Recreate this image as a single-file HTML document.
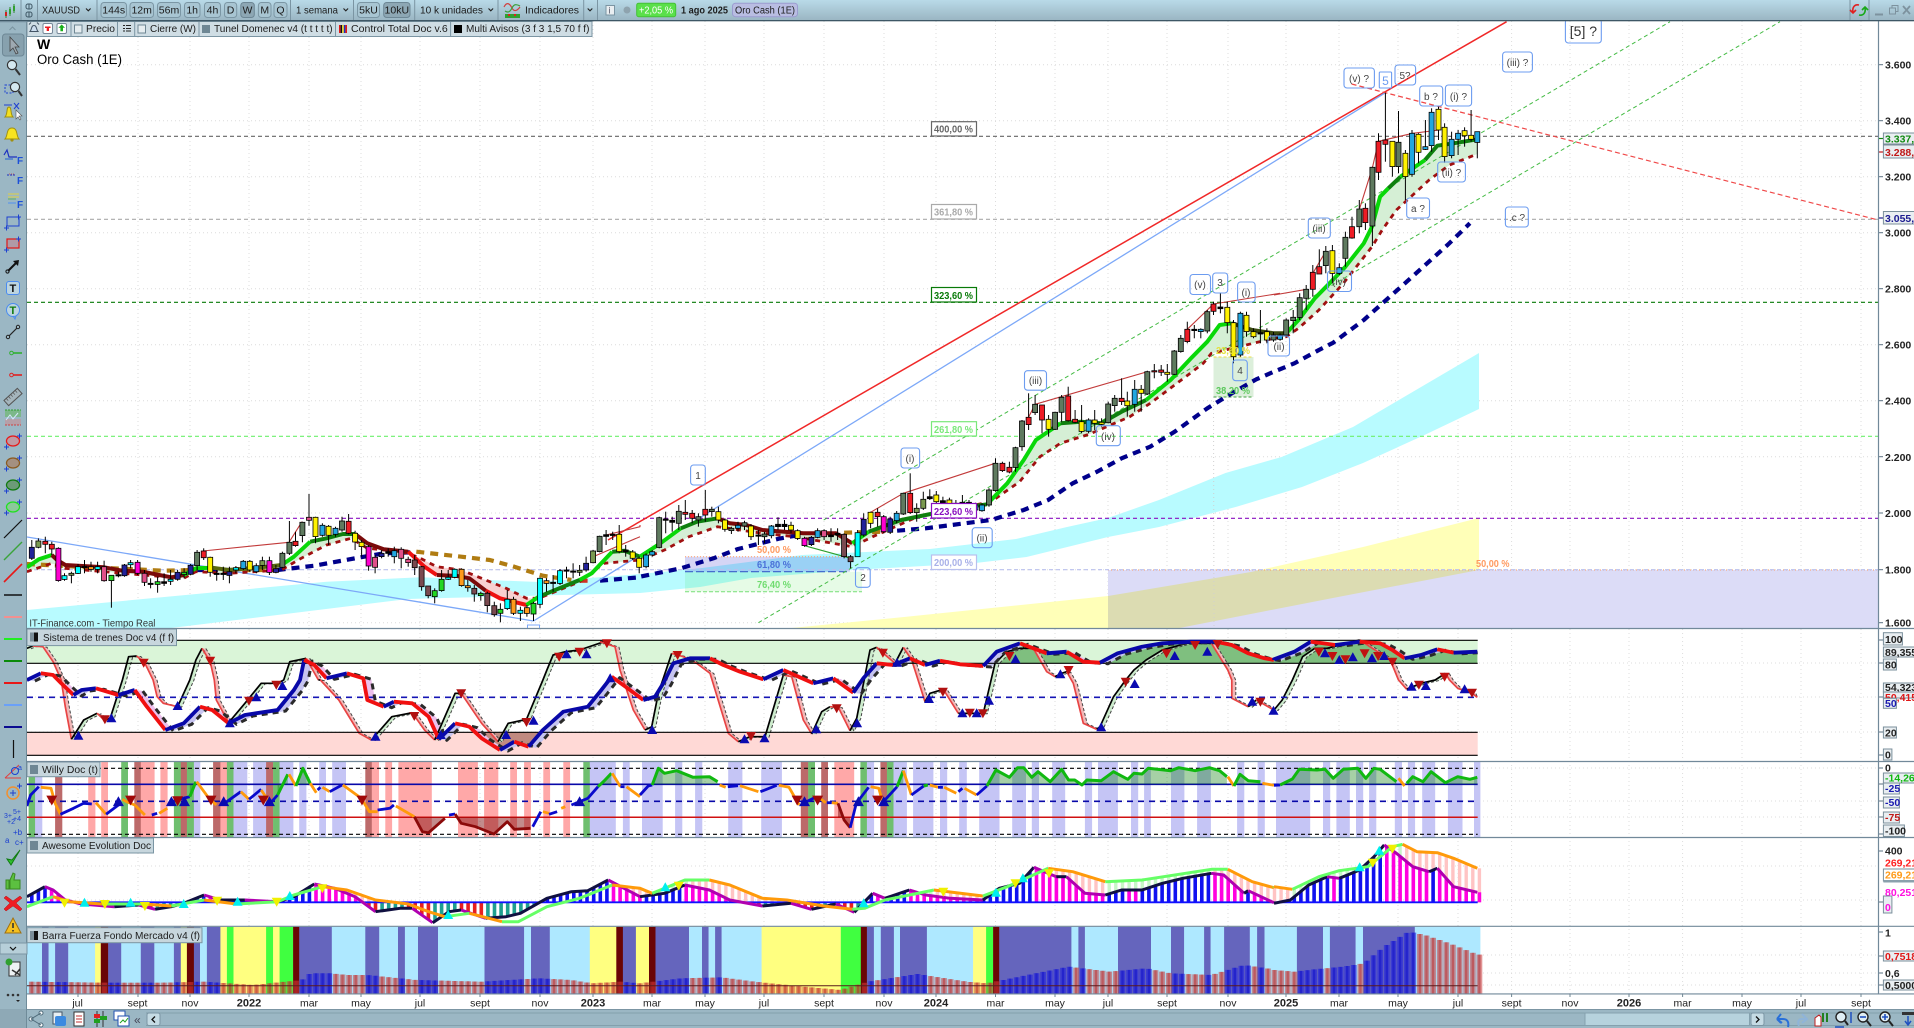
<!DOCTYPE html>
<html><head><meta charset="utf-8"><title>XAUUSD</title>
<style>
html,body{margin:0;padding:0;background:#fff;width:1914px;height:1028px;overflow:hidden}
svg{display:block;font-family:"Liberation Sans",sans-serif}
text{font-size:10px;fill:#1c1c1c}
.b{fill:#a8c5d2;stroke:#7b96a4;stroke-width:1}
.s{fill:#8da7b4;stroke:#6d8795;stroke-width:1}
.t{text-anchor:middle;font-size:10.5px}
.a{font-size:10.5px;font-weight:bold;fill:#222}
.w{fill:none;stroke:#6c9cf0;stroke-width:1.1}
.wt{text-anchor:middle;font-size:10px;fill:#444}
.ax{fill:#e9eef1;stroke:#7a8f9b;stroke-width:1}
.f{font-weight:bold;font-size:10px}
.x{text-anchor:middle;font-size:10.5px;fill:#222}
.y{text-anchor:middle;font-size:11px;font-weight:bold;fill:#222}
.lab{fill:#c7d6dd;stroke:#7b95a3;stroke-width:1}
</style></head><body>
<svg width="1914" height="1028" viewBox="0 0 1914 1028" xmlns="http://www.w3.org/2000/svg">
<defs>
<linearGradient id="tb" x1="0" y1="0" x2="0" y2="1"><stop offset="0" stop-color="#b9dae8"/><stop offset="1" stop-color="#9ab5c2"/></linearGradient>
<clipPath id="cm"><rect x="27" y="21" width="1851" height="607"/></clipPath>
<clipPath id="cg"><rect x="27" y="640" width="1451" height="23"/></clipPath>
<clipPath id="cr"><rect x="27" y="732" width="1451" height="23"/></clipPath>
<clipPath id="ct"><rect x="27" y="629" width="1451" height="132"/></clipPath>
<clipPath id="cw"><rect x="27" y="762" width="1451" height="75"/></clipPath>
</defs>
<rect width="1914" height="1028" fill="#fff"/>
<g id="dyn"></g>

<!-- wave labels -->
<rect class="w" x="1190" y="274.5" width="20.5" height="20" rx="3"/><text class="wt" x="1200" y="288">(v)</text>
<rect class="w" x="1212.7" y="273" width="15" height="20" rx="3"/><text class="wt" x="1220" y="286">3</text>
<rect class="w" x="1237.6" y="282" width="17.5" height="20" rx="3"/><text class="wt" x="1246" y="296">(i)</text>
<rect class="w" x="1308.3" y="218" width="22" height="20" rx="3"/><text class="wt" x="1319" y="232">(iii)</text>
<rect class="w" x="1327.5" y="271" width="24" height="20.5" rx="3"/><text class="wt" x="1339" y="285">(iv)</text>
<rect class="w" x="1344" y="68" width="30.4" height="20" rx="3"/><text class="wt" x="1359" y="82">(v) ?</text>
<rect class="w" x="1379.3" y="72" width="12.3" height="16" rx="1"/><text class="wt" x="1385.5" y="85" style="font-size:12px;fill:#6c9cf0">5</text>
<rect class="w" x="1395" y="65" width="20.6" height="20" rx="3"/><text class="wt" x="1405" y="79">5?</text>
<rect class="w" x="1419.7" y="86" width="23" height="20" rx="3"/><text class="wt" x="1431" y="100">b ?</text>
<rect class="w" x="1445.4" y="85" width="26.2" height="21" rx="3"/><text class="wt" x="1458.5" y="100">(i) ?</text>
<rect class="w" x="1502.6" y="52" width="29.8" height="20" rx="3"/><text class="wt" x="1517.5" y="66">(iii) ?</text>
<rect class="w" x="1565.4" y="19" width="35.9" height="24" rx="3"/><text class="wt" x="1583.4" y="36" style="font-size:14px;fill:#333">[5] ?</text>
<rect class="w" x="1437.7" y="162" width="27.7" height="20" rx="3"/><text class="wt" x="1451.5" y="176">(ii) ?</text>
<rect class="w" x="1406.7" y="198" width="22.8" height="20" rx="3"/><text class="wt" x="1418" y="212">a ?</text>
<rect class="w" x="1505.4" y="207" width="22.9" height="20" rx="3"/><text class="wt" x="1517" y="221">.c ?</text>
<rect class="w" x="690.6" y="465" width="14.7" height="20" rx="3"/><text class="wt" x="698" y="479">1</text>
<rect class="w" x="901" y="448" width="18.6" height="20" rx="3"/><text class="wt" x="910" y="462">(i)</text>
<rect class="w" x="1024.5" y="370.7" width="22" height="19.5" rx="3"/><text class="wt" x="1035.5" y="384">(iii)</text>
<rect class="w" x="1096.3" y="425.7" width="24" height="20" rx="3"/><text class="wt" x="1108" y="440">(iv)</text>
<rect class="w" x="972.2" y="527.7" width="20" height="20" rx="3"/><text class="wt" x="982" y="541.5">(ii)</text>
<rect class="w" x="855.5" y="567.7" width="14.7" height="19.6" rx="3"/><text class="wt" x="863" y="581">2</text>
<rect class="w" x="1232.7" y="360" width="14.6" height="20.7" rx="3"/><text class="wt" x="1240" y="374">4</text>
<rect class="w" x="1268" y="336" width="21.5" height="20" rx="3"/><text class="wt" x="1279" y="350">(ii)</text>

<!-- fib labels -->
<rect x="931.5" y="121.7" width="45" height="14.3" fill="#fff" stroke="#666" stroke-width="1.2"/><text class="f" x="934" y="132.5" textLength="39" lengthAdjust="spacingAndGlyphs" style="fill:#666">400,00 %</text>
<rect x="931.5" y="204.5" width="45" height="14.5" fill="#fff" stroke="#aaa" stroke-width="1.2"/><text class="f" x="934" y="215.5" textLength="39" lengthAdjust="spacingAndGlyphs" style="fill:#aaa">361,80 %</text>
<rect x="931.5" y="287.5" width="45" height="14.5" fill="#fff" stroke="#087a08" stroke-width="1.2"/><text class="f" x="934" y="299" textLength="39" lengthAdjust="spacingAndGlyphs" style="fill:#087a08">323,60 %</text>
<rect x="931.5" y="421.7" width="45" height="14.3" fill="#fff" stroke="#7ae87a" stroke-width="1.2"/><text class="f" x="934" y="433" textLength="39" lengthAdjust="spacingAndGlyphs" style="fill:#7ae87a">261,80 %</text>
<rect x="931.5" y="503.5" width="45" height="14.5" fill="#fff" stroke="#8a10c0" stroke-width="1.2"/><text class="f" x="934" y="515" textLength="39" lengthAdjust="spacingAndGlyphs" style="fill:#8a10c0">223,60 %</text>
<rect x="931.5" y="555" width="45" height="14.5" fill="#fff" stroke="#b9c0ee" stroke-width="1.2"/><text class="f" x="934" y="566" textLength="39" lengthAdjust="spacingAndGlyphs" style="fill:#a8b0e8">200,00 %</text>
<text class="f" x="757" y="553" textLength="34" lengthAdjust="spacingAndGlyphs" style="fill:#ff9a60">50,00 %</text>
<text class="f" x="757" y="568" textLength="34" lengthAdjust="spacingAndGlyphs" style="fill:#4a70d8">61,80 %</text>
<text class="f" x="757" y="588" textLength="34" lengthAdjust="spacingAndGlyphs" style="fill:#6fdc6f">76,40 %</text>
<text class="f" x="1216" y="354" textLength="34" lengthAdjust="spacingAndGlyphs" style="fill:#e4e040">23,60 %</text>
<text class="f" x="1216" y="394" textLength="34" lengthAdjust="spacingAndGlyphs" style="fill:#5cc85c">38,20 %</text>
<text class="f" x="1476" y="567" textLength="33.5" lengthAdjust="spacingAndGlyphs" style="fill:#ff9a60">50,00 %</text>

<text x="37" y="49" style="font-size:14px;font-weight:bold;fill:#000">W</text>
<text x="37" y="64" style="font-size:13.5px;fill:#000" textLength="85" lengthAdjust="spacingAndGlyphs">Oro Cash (1E)</text>
<text x="29.4" y="626.5" style="font-size:10.5px;fill:#333" textLength="126" lengthAdjust="spacingAndGlyphs">IT-Finance.com - Tiempo Real</text>

<!-- panel labels -->
<rect class="lab" x="27" y="629" width="149.5" height="16.6"/><rect x="30" y="632.5" width="8" height="9" fill="#111"/><rect x="30" y="632.5" width="4" height="9" fill="#7b8e99"/><text x="43" y="641" textLength="131" lengthAdjust="spacingAndGlyphs">Sistema de trenes Doc v4 (f f)</text>
<rect class="lab" x="27" y="762" width="73" height="14.7"/><rect x="30" y="765" width="8" height="9" fill="#6f8794"/><text x="42" y="773" textLength="56" lengthAdjust="spacingAndGlyphs">Willy Doc (t)</text>
<rect class="lab" x="27" y="838" width="126.5" height="15"/><rect x="30" y="841" width="8" height="9" fill="#6f8794"/><text x="42" y="849" textLength="109" lengthAdjust="spacingAndGlyphs">Awesome Evolution Doc</text>
<rect class="lab" x="27" y="927.7" width="175" height="15"/><rect x="30" y="931" width="8" height="9" fill="#111"/><rect x="30" y="931" width="4" height="9" fill="#7b8e99"/><text x="42" y="939" textLength="158" lengthAdjust="spacingAndGlyphs">Barra Fuerza Fondo Mercado v4 (f)</text>

<!-- panel seps -->
<g stroke="#72899a" stroke-width="1.2" fill="none">
<path d="M27 628.5H1914M27 761.5H1914M27 837.5H1914M27 926.3H1914M27 994H1914"/>
<path d="M1878.5 21V1009"/>
</g>

<!-- price axis -->
<g class="axis">
<text class="a" x="1885" y="68.5">3.600</text><text class="a" x="1885" y="124.5">3.400</text><text class="a" x="1885" y="180.5">3.200</text><text class="a" x="1885" y="236.5">3.000</text><text class="a" x="1885" y="292.5">2.800</text><text class="a" x="1885" y="348.5">2.600</text><text class="a" x="1885" y="404.5">2.400</text><text class="a" x="1885" y="461">2.200</text><text class="a" x="1885" y="517">2.000</text><text class="a" x="1885" y="573.5">1.800</text><text class="a" x="1885" y="626.5">1.600</text>
<rect class="ax" x="1883.4" y="133" width="32" height="11"/><text class="a" x="1885" y="142.5" style="fill:#118811">3.337,7</text>
<rect class="ax" x="1883.4" y="145" width="32" height="13"/><text class="a" x="1885" y="156" style="fill:#c01818">3.288,5</text>
<rect class="ax" x="1883.4" y="211.5" width="32" height="12.5"/><text class="a" x="1885" y="222" style="fill:#1a1a90">3.055,6</text>
<rect class="ax" x="1883.4" y="632.7" width="19" height="12.3"/><text class="a" x="1885" y="643">100</text>
<rect class="ax" x="1883.4" y="647" width="32" height="10"/><text class="a" x="1885" y="656">89,355</text>
<rect class="ax" x="1883.4" y="659" width="13" height="11"/><text class="a" x="1885" y="668.5">80</text>
<rect class="ax" x="1883.4" y="683" width="32" height="9"/><text class="a" x="1885" y="691">54,323</text>
<rect class="ax" x="1883.4" y="692" width="32" height="6"/><text class="a" x="1885" y="701" style="fill:#e01818">50,415</text>
<rect class="ax" x="1883.4" y="698.3" width="13" height="10"/><text class="a" x="1885" y="707" style="fill:#1a1ab0">50</text>
<rect class="ax" x="1883.4" y="727" width="13" height="11"/><text class="a" x="1885" y="736.5">20</text>
<rect class="ax" x="1883.4" y="749" width="8.5" height="11"/><text class="a" x="1885" y="758.5">0</text>
<text class="a" x="1885" y="771.5">0</text>
<rect class="ax" x="1883.4" y="773" width="32" height="10"/><text class="a" x="1885" y="781.5" style="fill:#10b810">-14,263</text>
<rect class="ax" x="1883.4" y="783" width="16" height="11"/><text class="a" x="1885" y="792" style="fill:#1a1ab0">-25</text>
<rect class="ax" x="1883.4" y="797" width="16" height="11"/><text class="a" x="1885" y="806" style="fill:#1a1ab0">-50</text>
<rect class="ax" x="1883.4" y="812" width="16" height="11"/><text class="a" x="1885" y="821" style="fill:#c01818">-75</text>
<rect class="ax" x="1883.4" y="825" width="21" height="11.5"/><text class="a" x="1885" y="834.5">-100</text>
<text class="a" x="1885" y="854.5">400</text>
<text class="a" x="1885" y="866.5" style="fill:#ff2020">269,21</text>
<rect class="ax" x="1883.4" y="869" width="32" height="12" style="fill:#fff"/><text class="a" x="1885" y="878.5" style="fill:#ff9a18">269,21</text>
<rect x="1883.4" y="880" width="31" height="2.5" fill="#8aa0ac"/>
<text class="a" x="1885" y="896" style="fill:#ff10e0">80,251</text>
<rect class="ax" x="1883.4" y="896" width="8.5" height="17"/><text class="a" x="1885" y="911" style="fill:#ff10e0">0</text>
<text class="a" x="1885" y="936.5">1</text>
<rect class="ax" x="1883.4" y="951" width="32" height="10"/><text class="a" x="1885" y="960" style="fill:#e01818">0,7518</text>
<text class="a" x="1885" y="977">0,6</text>
<rect class="ax" x="1883.4" y="980" width="32" height="10"/><text class="a" x="1885" y="989">0,5000</text>
</g>

<!-- time axis -->
<rect x="27" y="994.5" width="1887" height="14.5" fill="#fff"/>
<text class="x" x="77.6" y="1006.5">jul</text><text class="x" x="137.5" y="1006.5">sept</text><text class="x" x="190" y="1006.5">nov</text><text class="y" x="249" y="1006.5">2022</text><text class="x" x="309" y="1006.5">mar</text><text class="x" x="361" y="1006.5">may</text><text class="x" x="420" y="1006.5">jul</text><text class="x" x="480" y="1006.5">sept</text><text class="x" x="540" y="1006.5">nov</text><text class="y" x="593" y="1006.5">2023</text><text class="x" x="652" y="1006.5">mar</text><text class="x" x="705" y="1006.5">may</text><text class="x" x="764" y="1006.5">jul</text><text class="x" x="824" y="1006.5">sept</text><text class="x" x="884" y="1006.5">nov</text><text class="y" x="936" y="1006.5">2024</text><text class="x" x="995.5" y="1006.5">mar</text><text class="x" x="1055" y="1006.5">may</text><text class="x" x="1108" y="1006.5">jul</text><text class="x" x="1167" y="1006.5">sept</text><text class="x" x="1228" y="1006.5">nov</text><text class="y" x="1286" y="1006.5">2025</text><text class="x" x="1339" y="1006.5">mar</text><text class="x" x="1398" y="1006.5">may</text><text class="x" x="1458" y="1006.5">jul</text><text class="x" x="1511.6" y="1006.5">sept</text><text class="x" x="1570" y="1006.5">nov</text><text class="y" x="1629" y="1006.5">2026</text><text class="x" x="1682.6" y="1006.5">mar</text><text class="x" x="1742" y="1006.5">may</text><text class="x" x="1801" y="1006.5">jul</text><text class="x" x="1861" y="1006.5">sept</text>
<g stroke="#6f8794" stroke-width="1"><path d="M78 994v3M138 994v3M190 994v3M249 994v3M309 994v3M361 994v3M420 994v3M480 994v3M540 994v3M593 994v3M652 994v3M705 994v3M764 994v3M824 994v3M884 994v3M936 994v3M995.5 994v3M1055 994v3M1108 994v3M1167 994v3M1228 994v3M1286 994v3M1339 994v3M1398 994v3M1458 994v3M1511.6 994v3M1570 994v3M1629 994v3M1682.6 994v3M1742 994v3M1801 994v3M1861 994v3"/></g>

<!-- bottom bar -->
<rect x="0" y="1009" width="1914" height="19" fill="#9bb7c4"/>
<path d="M0 1009.5H1914" stroke="#7b95a3"/><path d="M146 1013H1914M146 1025.5H1914" stroke="#83a0ad"/>
<rect x="1585" y="1013" width="164.5" height="12.5" fill="#b6d2dd" stroke="#85a1ae"/>
<rect x="1751" y="1013" width="13" height="12.5" fill="#c5dbe4" stroke="#7b95a3" rx="2"/><path d="M1756 1016.5l3 3-3 3" fill="none" stroke="#111" stroke-width="1.3"/>
<rect x="147" y="1013" width="13" height="12.5" fill="#c5dbe4" stroke="#7b95a3" rx="2"/><path d="M155 1016.5l-3 3 3 3" fill="none" stroke="#111" stroke-width="1.3"/>
<text x="134" y="1024" style="font-size:12px;fill:#445">«</text>
<g transform="translate(0,1019)">
<path d="M5 7L9-6l3 8 4-8M12 6L18-7l2 2-6 12z" fill="#f0d040" stroke="#555" stroke-width=".9"/>
<g fill="#fff" stroke="#4f6b7a"><circle cx="31" cy="0" r="2"/><circle cx="41" cy="-6" r="2"/><circle cx="41" cy="6" r="2"/><path d="M31 0L41-6M31 0L41 6"/></g>
<rect x="53" y="-7" width="9" height="12" fill="#e8eef2" stroke="#456"/><rect x="55" y="-3" width="11" height="10" rx="2" fill="#3c8ae0"/>
<rect x="74" y="-7" width="10" height="14" fill="#fff" stroke="#333"/><path d="M76-3h6M76 0h6M76 3h6" stroke="#c03030"/>
<path d="M97-8v16M103-8v16" stroke="#333"/><rect x="94" y="-5" width="6" height="4" fill="#e02020"/><rect x="94" y="0" width="6" height="4" fill="#20a020"/><rect x="100" y="-3" width="7" height="4" fill="#20a020"/>
<rect x="114" y="-8" width="11" height="9" fill="#fff" stroke="#2050b0"/><rect x="118" y="-3" width="11" height="10" fill="#fff" stroke="#2050b0"/><path d="M120 4l3-3 2 2 3-4" stroke="#20a020" fill="none"/>
<path d="M1782 4l-5-4 0 0M1777 0h6c5 0 6 4 5 8" fill="none" stroke="#2a70d8" stroke-width="2"/><path d="M1777 0l4-5M1777 0l4 4" stroke="#2a70d8" stroke-width="2"/>
<path d="M1805 0h6c5 0 4 5 3 7M1811-5l-5 5 5 4" transform="matrix(-1 0 0 1 3613 0)" fill="none" stroke="#8fb4d8" stroke-width="2"/>
<path d="M1815 7V-1l4-3 2 2v9z" fill="#fff" stroke="#c02020"/><path d="M1823 3V-6M1827 3V-6" stroke="#208020" stroke-width="2"/>
<circle cx="1841" cy="-2" r="5" fill="#dfeef4" stroke="#222" stroke-width="1.4"/><path d="M1845 2l3 4" stroke="#222" stroke-width="2"/><path d="M1851-7v11M1835 8h9" stroke="#2050c0" stroke-width="1.5"/>
<circle cx="1863" cy="-2" r="5" fill="#dfeef4" stroke="#222" stroke-width="1.4"/><path d="M1867 2l4 5" stroke="#222" stroke-width="2"/><path d="M1860-2h6" stroke="#2050c0" stroke-width="1.6"/>
<circle cx="1885" cy="-2" r="5" fill="#dfeef4" stroke="#222" stroke-width="1.4"/><path d="M1889 2l4 5" stroke="#222" stroke-width="2"/><path d="M1882-2h6M1885-5v6" stroke="#2050c0" stroke-width="1.6"/>
<rect x="1902" y="-7" width="12" height="3" fill="#333"/><path d="M1908-3v8M1905 2l3 4 3-4" stroke="#2050c0" stroke-width="1.5" fill="none"/>
</g>

<!-- left toolbar -->
<rect x="0" y="21" width="27" height="988" fill="#9bb7c4"/>
<rect x="0" y="1009" width="27" height="19" fill="#8ea9b6"/>
<path d="M26.5 21V1028" stroke="#6f8b99"/>
<path d="M9.5 30l3-3 3 3" fill="none" stroke="#7a93a0"/>
<rect x="2.5" y="34" width="21.5" height="22" rx="3" fill="#87a1ae" stroke="#6e8896"/>
<g>
<g transform="translate(13,45)"><path d="M-3-8V6L0 3 3 9 5 8 2 2H6Z" fill="#9ea9b1" stroke="#444" stroke-width=".8"/></g>
<g transform="translate(13,67)" fill="#d4e8f0" stroke="#333"><circle cx="-1" cy="-2" r="4.6" stroke-width="1.2"/><path d="M2.5 2L7 8" stroke-width="2"/></g>
<g transform="translate(13,89)"><rect x="-8" y="-4" width="8" height="8" fill="none" stroke="#1c40d0" stroke-dasharray="2 1.5"/><circle cx="2" cy="-2" r="4.6" fill="#d4e8f0" stroke="#333" stroke-width="1.2"/><path d="M5.5 2L9 7" stroke="#333" stroke-width="2"/></g>
<g transform="translate(13,111)"><path d="M-8 6c3-3 1-10 4-10s1 7 4 10z" fill="#f4e020" stroke="#a09010"/><path d="M-9-6h8M1-8L6-2M6-8L1-2" stroke="#2040d0" fill="none"/><path d="M3-1V8L5 6 7 9 8 8 6 5h3z" fill="#fff" stroke="#555" stroke-width=".6"/></g>
<g transform="translate(12,133)"><path d="M-7 6c3-3 1-11 7-11s4 8 7 11z" fill="#f8e420" stroke="#a09010"/><circle cx="0" cy="7" r="1.6" fill="#a09010"/></g>
<g transform="translate(13,156)"><path d="M-9-1L-6-6-4 1 4 1" fill="none" stroke="#1c30c0" stroke-width="1.2"/><path d="M-8 3h8" stroke="#2060d0"/><text x="4" y="8" style="font-size:10px;font-weight:bold;fill:#1c50d8">F</text></g>
<g transform="translate(13,178)"><path d="M-6-3h9" stroke="#1c30c0" stroke-dasharray="2 1"/><path d="M-4-4h6" stroke="#d04040" stroke-width=".7" stroke-dasharray="1 1"/><text x="4" y="6" style="font-size:10px;font-weight:bold;fill:#1c50d8">F</text></g>
<g transform="translate(13,200)"><path d="M-5-6H6M-5-3H6" stroke="#e0d040"/><path d="M-5-1H3" stroke="#60b060"/><path d="M-5 3H3" stroke="#5090f0"/><text x="4" y="8" style="font-size:10px;font-weight:bold;fill:#1c50d8">F</text></g>
<g transform="translate(13,222)" stroke="#1c40d0" fill="none"><rect x="-6" y="-5" width="12" height="9"/><path d="M-9 6h5M-6.5 3.5v5M3 -5h5M5.5-7.5v5" /></g>
<g transform="translate(13,244)"><rect x="-6" y="-5" width="12" height="9" fill="#b09aa6" stroke="#e01818" stroke-width="1.2"/><path d="M-9 6h5M-6.5 3.5v5M3 -5h5M5.5-7.5v5" stroke="#1c40d0"/></g>
<g transform="translate(13,266)"><path d="M-5 5L4-4" stroke="#111" stroke-width="2"/><path d="M6-6L0-5 5 0z" fill="#111"/><circle cx="-5.5" cy="5.5" r="1.6" fill="none" stroke="#111"/></g>
<g transform="translate(13,288)"><rect x="-6.5" y="-6.5" width="13" height="13" rx="2.5" fill="#bcd4df" stroke="#4b8cf0"/><text x="-3.5" y="4" style="font-size:11px;font-weight:bold;fill:#111">T</text></g>
<g transform="translate(13,310)"><circle r="6.5" fill="#bcd4df" stroke="#4b8cf0"/><path d="M0 6l2 3 1-3" stroke="#4b8cf0" fill="none"/><text x="-3.5" y="4" style="font-size:11px;font-weight:bold;fill:#107a10">T</text></g>
<g transform="translate(13,332)" fill="none" stroke="#222"><circle cx="-5" cy="5" r="1.7"/><circle cx="5" cy="-5" r="1.7"/><path d="M-4 4L4-4" stroke-width="1.2"/></g>
<g transform="translate(13,353)"><circle cx="-1.5" r="1.8" fill="none" stroke="#30b030"/><path d="M0 0h9" stroke="#30b030" stroke-width="1.6"/></g>
<g transform="translate(13,375)"><circle cx="-1.5" r="1.8" fill="none" stroke="#e02020"/><path d="M0 0h9" stroke="#e02020" stroke-width="1.6"/></g>
<g transform="translate(13,397) rotate(-42)"><rect x="-9" y="-3.5" width="18" height="7" fill="#a5b5bd" stroke="#555"/><path d="M-6-3.5v3M-3-3.5v3M0-3.5v3M3-3.5v3M6-3.5v3" stroke="#555" stroke-width=".7"/></g>
<g transform="translate(13,418)"><rect x="-8" y="-8" width="16" height="7" fill="#7cb88a"/><rect x="-8" y="1" width="16" height="6" fill="#b5a0a8"/><path d="M-8-8h16" stroke="#30a030" stroke-dasharray="2 1"/><path d="M-8 7h16" stroke="#d04040" stroke-dasharray="2 1"/><path d="M-7 2L-3-3 0 1 5-5" fill="none" stroke="#d8e8ff"/></g>
<g transform="translate(13,441)"><ellipse rx="6.5" ry="5" fill="#c09aa4" stroke="#e81818" stroke-width="1.3"/><path d="M-9 6h5M-6.5 3.5v5M4-5h5M6.5-7.5v5" stroke="#1c40d0"/></g>
<g transform="translate(13,463)"><ellipse rx="6.5" ry="5" fill="#a49080" stroke="#8a5a20" stroke-width="1.3"/><path d="M-9 6h5M-6.5 3.5v5M4-5h5M6.5-7.5v5" stroke="#1c40d0"/></g>
<g transform="translate(13,485)"><ellipse rx="6.5" ry="5" fill="#6c9a78" stroke="#107a10" stroke-width="1.3"/><path d="M-9 6h5M-6.5 3.5v5M4-5h5M6.5-7.5v5" stroke="#1c40d0"/></g>
<g transform="translate(13,507)"><ellipse rx="6.5" ry="5" fill="#8cc89a" stroke="#20e020" stroke-width="1.3"/><path d="M-9 6h5M-6.5 3.5v5M4-5h5M6.5-7.5v5" stroke="#1c40d0"/></g>
<path d="M4 538L22 520" stroke="#111" stroke-width="1.2"/><path d="M4 560L22 542" stroke="#3aa43a" stroke-width="1.4"/><path d="M4 582L22 564" stroke="#e81818" stroke-width="1.6"/>
<path d="M4 595H22" stroke="#111" stroke-width="1.4"/><path d="M4 617H22" stroke="#f29090" stroke-width="2"/><path d="M4 639H22" stroke="#20ee20" stroke-width="2"/><path d="M4 661H22" stroke="#0a8a0a" stroke-width="2"/><path d="M4 683H22" stroke="#e81818" stroke-width="2"/><path d="M4 705H22" stroke="#6aa0f8" stroke-width="2"/><path d="M4 727H22" stroke="#0a0a90" stroke-width="2"/><path d="M13.5 740V758" stroke="#111" stroke-width="1.2"/>
<g transform="translate(13,771)"><path d="M-8 7L6-6M-8 7H8" stroke="#e04040" fill="none"/><circle cx="2" cy="0" r="3.5" fill="none" stroke="#1c40d0"/><text x="5" y="-1" style="font-size:7px;fill:#1c40d0">a</text></g>
<g transform="translate(13,793)"><circle r="6" fill="none" stroke="#f09030" stroke-width="1.5"/><path d="M-3 0h6M0-3v6" stroke="#1c40d0"/><path d="M4-7h5M6.5-9.5v5" stroke="#1c40d0"/></g>
<text x="4" y="818" style="font-size:7px;fill:#1c40d0">3+</text><text x="13" y="814" style="font-size:7px;fill:#1c40d0">5+</text><text x="13" y="821" style="font-size:7px;fill:#1c40d0">+4</text><text x="7" y="824" style="font-size:7px;fill:#1c40d0">+2</text>
<text x="5" y="843" style="font-size:8px;fill:#1c40d0">a</text><text x="13" y="835" style="font-size:8px;fill:#1c40d0">+b</text><text x="15" y="845" style="font-size:8px;fill:#1c40d0">c+</text>
<path d="M7 859l4 6 9-15-8 10z" fill="#30c030" stroke="#107a10"/>
<path d="M6 880h3v9H6zM10 880l3-7 2 1-1 6h6v9H10z" fill="#5cc040" stroke="#3a8a20"/>
<path d="M6 896l7 5 7-5 2 2-6 5 6 6-2 2-7-5-7 5-2-2 6-6-6-5z" fill="#ee1c24" stroke="#b01010" stroke-width=".5"/>
<path d="M13 918L21 933H5z" fill="#f4c020" stroke="#a07010"/><path d="M13 923v5M13 930v1.5" stroke="#333" stroke-width="1.6"/>
<rect x="0" y="943" width="27" height="11" fill="#b7cfd9" stroke="#7b95a3"/><path d="M10 947l3 3 3-3" fill="none" stroke="#111" stroke-width="1.2"/>
<g transform="translate(14,968)"><rect x="-5" y="-6" width="11" height="14" fill="#eef2f4" stroke="#333"/><circle cx="-5" cy="-6" r="3.5" fill="#30a030"/><path d="M-2 2L6 7M1 7L6 1" stroke="#333" stroke-width="1.6"/></g>
<g fill="#333"><circle cx="8" cy="995" r="1.3"/><circle cx="13" cy="995" r="1.3"/><circle cx="18" cy="995" r="1.3"/></g><path d="M16 1000l2 2 2-2" fill="#222"/>
</g>

<!-- tab row -->
<rect x="27" y="21.5" width="565" height="15" fill="#cfdde4" stroke="#7b95a3"/>
<g stroke="#7b95a3"><path d="M71 22V36M117.5 22V36M134.7 22V36M199 22V36M335.5 22V36M450.6 22V36"/></g>
<g transform="translate(34,28.5)"><path d="M-4 3c2-2 1-6 4-6s2 4 4 6z" fill="#cde" stroke="#456"/><path d="M-5-4l2-2M5-4l-2-2" stroke="#456"/></g>
<rect x="43" y="23.5" width="9.5" height="10" rx="1.5" fill="#fff" stroke="#789"/><path d="M45 26.5h5.5v1.5H45zM46.7 28H49v3h-2.3z" fill="#ee1c24"/>
<rect x="57" y="23.5" width="9.5" height="10" rx="1.5" fill="#fff" stroke="#789"/><path d="M61.7 24.5l3.3 3.3h-2v3.5h-2.6v-3.5h-2z" fill="#19b019"/>
<rect x="74.5" y="25" width="7.5" height="8" fill="#e6edf0" stroke="#6f8794"/><text x="86" y="32" textLength="29" lengthAdjust="spacingAndGlyphs">Precio</text>
<path d="M123 25.5h2M123 28.5h2M123 31h2M126 25.5h5M126 28.5h5M126 31h5" stroke="#222"/>
<rect x="138" y="25" width="7.5" height="8" fill="#e6edf0" stroke="#6f8794"/><text x="150" y="32" textLength="46" lengthAdjust="spacingAndGlyphs">Cierre (W)</text>
<rect x="202" y="25" width="8" height="8" fill="#6f8794"/><text x="214" y="32" textLength="118.6" lengthAdjust="spacingAndGlyphs">Tunel Domenec v4 (t t t t t)</text>
<rect x="339" y="25" width="1.6" height="8" fill="#e01818"/><rect x="340.6" y="25" width="1.6" height="8" fill="#111"/><rect x="342.2" y="25" width="1.6" height="8" fill="#f4e020"/><rect x="343.8" y="25" width="1.6" height="8" fill="#1c30c0"/><rect x="345.4" y="25" width="1.6" height="8" fill="#e01818"/>
<text x="351" y="32" textLength="96.8" lengthAdjust="spacingAndGlyphs">Control Total Doc v.6</text>
<rect x="454" y="25" width="8" height="8" fill="#000"/><text x="466" y="32" textLength="123.4" lengthAdjust="spacingAndGlyphs">Multi Avisos (3 f 3 1,5 70 f f)</text>

<!-- top toolbar -->
<rect x="0" y="0" width="1914" height="20.5" fill="url(#tb)"/>
<rect x="0" y="20" width="1914" height="1.3" fill="#3e5766"/>
<rect x="0" y="21.3" width="27" height="1" fill="#7b95a3"/>
<g stroke="#7b95a3"><path d="M21 0V20M37.5 0V20M97 0V20M290.5 0V20M353.5 0V20M414.7 0V20M498 0V20M583.7 0V20M597.5 0V20M1850 0V20M1869 0V20"/></g>
<g><path d="M6 10v8M10 7v9M14 4v9" stroke="#2a8a2a"/><rect x="5" y="12" width="2" height="4" fill="#d02020"/><rect x="9" y="9" width="2" height="5" fill="#30a030"/><rect x="13" y="6" width="2" height="5" fill="#30a030"/></g>
<g fill="none" stroke="#3f5866"><rect x="26" y="4" width="6" height="5" rx="2"/><rect x="26" y="12" width="6" height="5" rx="2"/><path d="M29 4v5M29 12v5"/></g>
<text x="42" y="13.5" textLength="38" lengthAdjust="spacingAndGlyphs">XAUUSD</text><path d="M86 8.5l2.3 2.3 2.3-2.3" fill="none" stroke="#222" stroke-width="1.1"/>
<rect class="b" x="101" y="2.5" width="25.5" height="15" rx="3"/><text class="t" x="113.7" y="13.5">144s</text>
<rect class="b" x="130" y="2.5" width="23.5" height="15" rx="3"/><text class="t" x="141.7" y="13.5">12m</text>
<rect class="b" x="157.5" y="2.5" width="23" height="15" rx="3"/><text class="t" x="169" y="13.5">56m</text>
<rect class="b" x="184.5" y="2.5" width="15.5" height="15" rx="3"/><text class="t" x="192.2" y="13.5">1h</text>
<rect class="b" x="204.5" y="2.5" width="16" height="15" rx="3"/><text class="t" x="212.5" y="13.5">4h</text>
<rect class="b" x="224.5" y="2.5" width="12.2" height="15" rx="3"/><text class="t" x="230.6" y="13.5">D</text>
<rect class="s" x="240.8" y="2.5" width="13.5" height="15" rx="3"/><text class="t" x="247.5" y="13.5">W</text>
<rect class="b" x="258.4" y="2.5" width="12.6" height="15" rx="3"/><text class="t" x="264.7" y="13.5">M</text>
<rect class="b" x="274" y="2.5" width="13" height="15" rx="3"/><text class="t" x="280.5" y="13.5">Q</text>
<text x="296" y="13.5" textLength="42" lengthAdjust="spacingAndGlyphs">1 semana</text><path d="M343.5 8.5l2.3 2.3 2.3-2.3" fill="none" stroke="#222" stroke-width="1.1"/>
<rect class="b" x="357.5" y="2.5" width="22" height="15" rx="3"/><text class="t" x="368.5" y="13.5">5kU</text>
<rect class="s" x="383.7" y="2.5" width="26.3" height="15" rx="3"/><text class="t" x="396.8" y="13.5">10kU</text>
<text x="420" y="13.5" textLength="63" lengthAdjust="spacingAndGlyphs">10 k unidades</text><path d="M488.5 8.5l2.3 2.3 2.3-2.3" fill="none" stroke="#222" stroke-width="1.1"/>
<path d="M504 7c3-6 6-3 8 1s5 3 8-1" fill="none" stroke="#d04040" stroke-width="1.2"/><path d="M505 11c3 2 5 1 7-3s4-4 8-2" fill="none" stroke="#3aa03a" stroke-width="1.2"/><path d="M505 14h15v4h-15z" fill="#30a030"/><rect x="508" y="14" width="2" height="2" fill="#e02020"/><rect x="514" y="14" width="2" height="2" fill="#e02020"/>
<text x="525" y="13.5" textLength="54" lengthAdjust="spacingAndGlyphs">Indicadores</text><path d="M587.7 8.5l2.3 2.3 2.3-2.3" fill="none" stroke="#222" stroke-width="1.1"/>
<rect x="606" y="5.5" width="8.5" height="9.5" fill="#e9eef1" stroke="#7b95a3"/><text x="608.5" y="13.5" style="font-size:9px;fill:#556">i</text>
<circle cx="627" cy="10" r="3.5" fill="#8ea3ae"/>
<rect x="636.7" y="3.2" width="39" height="13.5" rx="2" fill="#5ae04a" stroke="#45c038"/><text x="639" y="13.5" textLength="34" lengthAdjust="spacingAndGlyphs" style="fill:#fff">+2,05 %</text>
<text x="681" y="13.5" textLength="47" lengthAdjust="spacingAndGlyphs" style="font-weight:bold">1 ago 2025</text>
<rect x="732.5" y="3.2" width="65" height="13.5" rx="3" fill="#b9bde2" stroke="#9b9cd0"/><text x="735" y="13.5" textLength="60" lengthAdjust="spacingAndGlyphs">Oro Cash (1E)</text>
<g transform="translate(1859,10)" fill="none" stroke-width="1.6"><path d="M-6 2c-1-5 2-8 6-7" stroke="#e02020"/><path d="M6-2c1 5-2 8-6 7" stroke="#18a818"/><path d="M-9 0l3 3 3-3" stroke="#e02020"/><path d="M9 0l-3-3-3 3" stroke="#18a818"/></g>
<path d="M1875 14.5h8" stroke="#7d929e" stroke-width="2"/>
<g fill="none" stroke="#7d929e"><rect x="1889.5" y="8" width="6" height="6"/><path d="M1892 8V5.5h6v6h-2.5"/><path d="M1903 6l7 8M1910 6l-7 8" stroke-width="1.8"/></g>
</svg>

<script>
(function(){
const O={A:[0,340],B:[640,340],C:[1274,340],D:[0,680],E:[640,680],F:[1274,680],S:[0,0],T:[640,0],U:[1274,0],V:[600,630,3]};
const XK=2.45,YK=3;
function Z(s){let c=[0,0],r=[],t=s.trim().split(/\s+/);for(let i=0;i<t.length;){if(/[A-Z]/.test(t[i])){c=O[t[i]];i++}else{r.push([c[0]+(+t[i])/(c[2]||XK),c[1]+(+t[i+1])/YK]);i+=2}}return r}
const pts=a=>a.map(p=>p[0].toFixed(1)+','+p[1].toFixed(1)).join(' ');
let h='';
const pl=(s,col,w,ex)=>{h+='<polyline points="'+pts(typeof s=='string'?Z(s):s)+'" fill="none" stroke="'+col+'" stroke-width="'+w+'" stroke-linejoin="round" '+(ex||'')+'/>'};
const pg=(a,col,ex)=>{h+='<polygon points="'+pts(a)+'" fill="'+col+'" '+(ex||'')+'/>'};
const rc=(x,y,w,t,col,ex)=>{h+='<rect x="'+x.toFixed(1)+'" y="'+y.toFixed(1)+'" width="'+w.toFixed(1)+'" height="'+t.toFixed(1)+'" fill="'+col+'" '+(ex||'')+'/>'};
const ln=(a,b,c,d,col,w,ex)=>{h+='<line x1="'+a+'" y1="'+b+'" x2="'+c+'" y2="'+d+'" stroke="'+col+'" stroke-width="'+w+'" '+(ex||'')+'/>'};
const yAt=(p,x)=>{if(x<=p[0][0])return p[0][1];for(let i=0;i<p.length-1;i++){if(x>=p[i][0]&&x<=p[i+1][0]){const d=p[i+1][0]-p[i][0]||1;return p[i][1]+(p[i+1][1]-p[i][1])*(x-p[i][0])/d}}return p[p.length-1][1]};
const dirSeg=(p,up,dn,w,ex)=>{let st=0,cur=null;for(let i=0;i<p.length-1;i++){const c=p[i+1][1]<=p[i][1]?up:dn;if(cur===null)cur=c;if(c!==cur){pl(p.slice(st,i+1),cur,w,ex);st=i;cur=c}}pl(p.slice(st),cur,w,ex)};
const tri=(x,y,up,col,s)=>{s=s||5;pg(up?[[x,y-s],[x-s,y+s*.8],[x+s,y+s*.8]]:[[x,y+s],[x-s,y-s*.8],[x+s,y-s*.8]],col)};
const tris=(crop,str,up,col,s)=>{Z(crop+' '+str).forEach(p=>tri(p[0],p[1],up,col,s))};

/* GRID */
const vt=[78,138,190,249,309,361,420,480,540,593,652,705,764,824,884,936,995.5,1055,1108,1167,1228,1286,1339,1398,1458,1511.6,1570,1629,1682.6,1742,1801,1861];
vt.forEach(x=>ln(x,21,x,994,'#dcdcdc',1,'stroke-dasharray="1 3"'));
[64.7,120.7,176.7,232.7,288.7,344.7,400.7,456.7,513,569.7,622.7,663,697,732,768,801,817,866,900,955,973,985].forEach(y=>ln(27,y,1878,y,'#dcdcdc',1,'stroke-dasharray="1 3"'));

/* MAIN */
h+='<g clip-path="url(#cm)">';
let top=Z("A 66 810 800 725 1030 712 1320 726").concat([[640,574],[700,568.3],[802,555],[930,549],[1016,539],[1067,527],[1108,518],[1159,500],[1225.5,473],[1281.6,457],[1353,427],[1404,397],[1479,353]]);
let bot=[[27,640],[171,628],[408,599],[445,598],[640,593],[700,587],[751,578],[853,570],[975.5,563],[1026.5,557],[1108,537],[1159,527],[1235.7,507],[1302,487],[1363,463],[1424.5,435],[1479,409]];
pg(top.concat(bot.slice().reverse()),'#b8fbff');
top=[[771,630],[904,617],[1108,596],[1251,572],[1363,547],[1479,518]];
bot=[[771,632],[1159,632],[1261,612],[1338,597],[1479,570]];
pg(top.concat(bot.slice().reverse()),'#ffffb8');
rc(1108,570,770,59,'#dcdcf7','style="mix-blend-mode:multiply"');
rc(685,556.7,165,15,'#d5d5f5','style="mix-blend-mode:multiply"');
rc(685,571.7,177,20,'#e6fbe6','style="mix-blend-mode:multiply"');
rc(1213.5,357,40,40,'#dcefdb','style="mix-blend-mode:multiply"');
ln(685,556.7,850,556.7,'#ff9a60',1,'stroke-dasharray="1 2"');
ln(685,571.7,850,571.7,'#3a60c8',1.2,'stroke-dasharray="8 3"');
ln(685,591.7,862,591.7,'#78e078',1,'stroke-dasharray="4 2"');
ln(1213.5,357,1253.5,357,'#eee040',1,'stroke-dasharray="3 2"');
ln(1213.5,397,1253.5,397,'#40a040',1,'stroke-dasharray="3 2"');
ln(1213.5,397,1214,628,'#d0d0d0',1,'stroke-dasharray="1 3"');
ln(1108,570,1878,570,'#ff9a60',1,'stroke-dasharray="1 2"');
[[136.3,'#666'],[219.3,'#aaa'],[302.3,'#087a08'],[436.3,'#6cf06c'],[518.3,'#8a10c0'],[569.7,'#b9c0ee']].forEach(a=>ln(27,a[0],1878,a[0],a[1],1.1,'stroke-dasharray="4 3"'));

/* fast / slow */
const fast=Z("A 66 682 95 658 127 645 140 660 160 675 255 682 300 692 350 695 390 705 420 712 450 705 480 685 520 683 560 690 640 682 690 675 720 650 760 605 800 595 840 582 870 582 900 610 940 628 1000 635 1040 680 1070 705 1120 708 1150 715 1190 752 1225 775 1290 795 1320 770 1350 755 1420 720 1450 700 1500 635 1530 632 1568 650 B 50 610 100 565 140 545 190 535 220 550 260 555 300 570 400 580 480 580 520 610 560 575 640 540 700 525 780 505 850 493 900 430 940 360 970 300 1030 250 1080 245 1130 250 1180 215 1240 180 1300 120 1350 55 1390 5 T 1420 975 1450 970 1500 990 1553 1000 U 30 1000 60 960 100 895 140 845 175 800 220 730 240 680 260 590 280 565 310 530 340 505 370 480 400 437 440 430 498 418");
const slow=Z("A 66 695 127 670 160 685 300 700 450 715 480 695 560 700 690 690 730 660 800 615 860 595 900 625 960 632 1000 640 1030 655 1070 680 1130 690 1200 725 1240 745 1290 775 1320 775 1420 725 1480 670 1568 660 B 20 650 60 630 120 590 190 560 300 580 380 590 520 620 570 590 680 530 740 515 860 485 930 425 980 350 1030 310 1100 283 1200 230 1250 190 1310 135 1380 70 1400 40 U 0 1015 30 1010 60 985 110 930 170 850 240 740 265 690 300 630 380 540 430 495 498 462");
function band(x1,x2,col){let a=[],b=[];for(let x=x1;x<=x2;x+=3){a.push([x,yAt(fast,x)]);b.unshift([x,yAt(slow,x)])}pg(a.concat(b),col)}
band(27,410,'#d6efd6');band(410,535,'#f8d0d0');band(535,1478,'#d5efd5');

/* big MA */
const bigD='stroke-dasharray="8 6"';
pl("A 66 672 160 678 400 692 480 690",'#b07c12',4.2,bigD);
pl("A 480 690 560 690",'#00008b',4.2,bigD);
pl("A 560 690 680 690",'#b07c12',4.2,bigD);
pl("A 680 690 770 677 870 655 940 640 1010 637",'#00008b',4.2,bigD);
pl("A 1020 635 1130 650 1200 660 1260 680 1330 707 1400 720",'#b07c12',4.2,bigD);
pl("A 1420 722 1450 722",'#d03020',4.2,bigD);
pl("A 1470 722 1568 712 B 0 710 100 685 180 655 240 627 340 596 400 583",'#00008b',4.2,bigD);
pl("B 500 578 600 575",'#b07c12',4.2,bigD);
pl("B 630 572 700 565 860 540 940 510 1000 480 1060 430 1120 395 1180 355 1250 320 1310 275 1390 205 1450 160 1510 118 1553 95 C 10 90 50 70 110 30 145 8 U 165 1010 220 960 270 905 325 845 375 790 425 735 480 670",'#00008b',4.2,bigD);

/* channels, long lines */
ln(608,540,1506.6,21.7,'#f02828',1.5);
ln(533.5,621,1385.4,92.7,'#7ca8f8',1.3);
ln(27,537,533.5,621,'#7ca8f8',1.3);
ln(823.7,520,1670,21.7,'#44bb44',1,'stroke-dasharray="4 3"');
ln(758.4,622.7,1780,21.7,'#44bb44',1,'stroke-dasharray="4 3"');
ln(1351.6,84,1878,220,'#f04848',1.2,'stroke-dasharray="5 3"');
h+='<rect x="527.5" y="625" width="12" height="4" fill="none" stroke="#7ca8f8"/>';

/* slow + fast colored */
pl(slow,'#a01010',2.8,'stroke-dasharray="5 5"');
const G='#08d808',DG='#0f800f',M='#7a0a0a',R='#ee1111';
[[G,"A 66 682 95 658 127 645"],[M,"A 127 645 140 660 160 675 255 682 300 692 350 695 390 705 420 712 450 705"],[G,"A 450 705 480 685 520 683"],['#5a6a10',"A 520 683 560 690 640 682 690 675"],[G,"A 690 675 720 650 760 605"],[DG,"A 760 605 800 595 840 582 870 582"],[M,"A 870 582 900 610 940 628 1000 635"],[R,"A 1000 635 1040 680 1070 705"],[M,"A 1070 705 1120 708 1150 715 1190 752"],[R,"A 1190 752 1225 775 1290 795"],[G,"A 1290 795 1320 770"],[DG,"A 1320 770 1350 755 1420 720"],[G,"A 1420 720 1450 700 1500 635"],[DG,"A 1500 635 1530 632 1568 650"],[G,"B 0 650 50 610 100 565"],[DG,"B 100 565 140 545 190 535"],[M,"B 190 535 220 550 260 555 300 570 400 580 480 580 520 610"],[G,"B 520 610 560 575"],[DG,"B 560 575 640 540 700 525 780 505 850 493"],[G,"B 850 493 900 430 940 360 970 300 1030 250"],[DG,"B 1030 250 1080 245 1130 250 1180 215 1240 180"],[G,"B 1240 180 1300 120 1350 55 1390 5 T 1420 975 1450 970"],['#3a4a10',"T 1450 970 1500 990 1553 1000 U 0 1000 30 1000"],[G,"U 30 1000 60 960 100 895 140 845 175 800 220 730 240 680 260 590 280 565"],[DG,"U 280 565 310 530"],[G,"U 310 530 340 505 370 480"],[DG,"U 370 480 400 437 440 430 498 418"]].forEach(a=>pl(a[1],a[0],4));

/* thin wave lines */
const WL='#c23a3a';
["A 497 633 708 607 740 545","A 1453 650 1568 590","A 1485 585 1568 560 B 0 555","B 565 517 645 460 870 370","B 952 232 968 193 1243 95","T 1341 988 1405 912 1568 880","U 0 885 80 868","U 95 820 127 754","U 210 625 241 503 256 424 340 400 405 390"].forEach(s=>pl(s,WL,1.1));
pl("B 403 617 516 655",'#2ca02c',1.1);

/* candles */
const CC={g:'#5f7a5f',r:'#ee1c25',y:'#fff200',c:'#22a7e0',n:'#22229a',m:'#ff00d0',p:'#e0508a',b:'#7a4a50',G:'#22d822',o:'#7a9a50',C:'#00ffff',O:'#ff9a1a',k:'#000'};
function cand(crop,str){const o=O[crop];str.split(';').forEach(r=>{const a=r.trim().split(' ');if(a.length<6)return;const x=o[0]+(+a[0])/XK,t=o[1]+(+a[1])/YK,b=o[1]+(+a[2])/YK,wt=o[1]+(+a[3])/YK,wb=o[1]+(+a[4])/YK;ln(x.toFixed(1),wt.toFixed(1),x.toFixed(1),wb.toFixed(1),'#000',1);rc(x-2.5,t,5,Math.max(b-t,1.2),CC[a[5]],'stroke="#000" stroke-width=".8"')})}
cand('A',"78 622 655 600 660 n;94 603 622 595 625 o;111 604 613 590 640 r;127 613 627 605 645 r;143 625 722 622 725 m;158 707 718 700 722 C;175 700 706 695 730 o;191 680 700 672 702 C;207 679 683 660 700 k;223 680 688 665 695 O;239 680 688 665 700 C;255 680 722 662 725 p;273 706 722 705 803 G;290 704 707 695 712 k;305 675 707 672 710 n;320 668 674 660 685 C;337 667 700 660 705 m;354 700 727 690 738 p;369 730 733 715 745 k;386 725 733 710 758 G;402 725 730 700 738 k;418 718 724 690 735 C;435 697 718 690 722 n;451 697 704 685 715 G;467 676 703 672 706 n;483 637 677 630 690 g;499 633 653 625 660 r;515 652 697 650 710 y;531 700 702 690 722 k;547 700 702 680 720 k;562 695 706 680 730 n;578 683 690 678 700 C;596 664 686 660 690 c;612 664 690 660 695 y;628 677 695 670 700 c;643 662 676 650 690 o;660 662 697 650 705 m;676 686 697 675 700 n;692 640 682 635 685 g;709 607 640 543 645 g;724 604 617 575 620 r;741 547 587 545 607 g;757 532 541 462 557 p;773 532 590 530 610 y;790 556 586 550 590 c;805 559 586 555 615 y;822 565 583 560 590 c;838 543 570 530 575 g;854 544 580 522 583 r;870 580 606 572 630 y;886 607 620 600 650 y;903 620 678 615 692 m;919 652 682 645 700 p;935 640 650 630 655 n;951 635 640 625 650 k;966 632 650 620 670 c;983 628 655 622 685 p;1000 658 668 650 680 p;1016 660 683 645 705 b;1033 680 740 678 752 b;1049 738 767 738 775 b;1065 752 770 745 790 G;1082 718 752 690 755 G;1098 712 718 690 720 C;1114 688 712 685 715 C;1131 688 737 685 740 O;1146 737 743 720 755 O;1162 745 762 735 785 b;1178 760 767 755 782 G;1194 760 797 755 817 b;1211 797 824 785 830 b;1226 808 820 790 847 G;1243 778 806 750 810 C;1258 778 820 770 825 O;1275 811 820 800 843 C;1291 803 820 795 830 O;1307 790 822 785 843 G;1323 715 793 712 805 C;1339 722 730 715 755 O;1355 727 730 705 755 k;1372 692 730 687 735 C;1388 690 693 680 715 k;1404 693 696 670 715 k;1420 691 697 675 708 o;1436 670 690 650 695 n;1453 633 668 630 670 o;1469 589 635 587 637 g;1485 584 589 570 615 k;1501 583 585 575 600 k;1517 583 635 555 640 y;1533 630 636 615 650 k;1550 636 655 630 660 y;1566 655 682 650 700 y");
cand('B',"15 645 680 640 685 c;30 635 645 630 650 c;47 533 622 530 625 g;63 537 541 515 580 k;79 541 547 530 575 k;95 514 550 495 570 g;111 517 523 480 540 r;128 520 535 510 550 r;143 530 540 520 560 g;160 508 525 450 545 r;176 508 515 500 530 g;192 515 540 500 550 y;208 540 568 535 575 y;224 565 572 560 582 g;240 556 565 545 575 c;256 548 558 542 570 g;272 558 590 552 600 y;290 585 588 570 615 k;305 582 590 575 610 g;322 558 587 555 595 c;338 553 560 532 570 k;354 553 560 540 570 k;370 556 570 545 580 y;386 572 595 568 600 y;403 595 617 590 620 m;420 592 614 588 618 n;435 572 592 565 595 c;451 572 590 568 600 p;468 585 590 565 605 k;484 580 585 565 600 k;500 583 650 580 655 b;516 650 665 645 685 b;533 578 650 570 650 C;548 538 585 520 590 n;565 517 550 515 565 y;582 517 530 505 560 r;597 530 575 525 580 m;613 537 577 530 582 n;629 520 542 513 550 c;645 460 522 458 525 g;662 460 518 400 522 r;678 505 518 490 545 o;694 478 505 455 510 o;710 470 476 448 480 k;726 465 485 453 490 y;742 482 490 470 495 k;758 480 495 473 497 y;774 490 496 480 500 k;790 487 500 465 500 k;806 487 495 480 505 k;822 495 510 488 515 c;838 495 512 490 515 c;855 450 495 445 500 g;871 370 452 355 455 g;888 370 392 365 396 r;905 382 396 365 400 r;920 323 382 320 395 g;936 243 320 240 332 g;952 232 254 160 270 r;968 193 218 165 225 g;985 195 240 195 280 r;1001 238 268 225 290 y;1017 217 268 215 270 g;1033 172 217 165 245 g;1049 168 242 140 245 r;1066 238 247 210 250 r;1082 245 274 195 280 y;1099 240 274 235 280 c;1114 240 250 210 270 y;1131 247 253 235 260 y;1147 192 248 185 250 g;1163 175 197 165 215 g;1180 175 185 115 195 r;1194 183 197 155 230 y;1212 148 193 120 215 c;1228 148 160 135 215 y;1243 95 162 92 165 g;1260 92 95 72 115 r;1277 90 97 75 108 r;1292 97 103 72 125 y;1309 33 103 30 105 g;1325 -5 35 -15 38 g");
cand('T',"1341 988 1025 965 1030 r;1358 988 992 975 1015 k;1374 988 995 985 1015 c;1390 935 993 930 1000 g;1405 912 934 905 945 r;1422 921 926 880 940 k;1439 922 968 905 1000 y;1454 968 1070 960 1090 y;1471 940 1065 935 1070 c;1486 946 995 935 1010 y;1503 995 1010 985 1015 y;1520 998 1002 930 1030 k;1536 995 1020 985 1030 y;1552 1005 1020 995 1025 g");
cand('U',"15 1005 1018 1000 1022 c;30 960 1005 955 1010 g;47 952 962 930 1000 g;63 893 952 880 960 g;79 868 895 855 930 g;95 817 868 795 890 r;111 800 822 748 822 r;127 754 797 738 820 g;143 752 820 735 850 y;160 803 820 790 825 c;175 712 775 695 800 g;191 680 714 650 716 r;209 627 680 600 700 g;224 625 668 610 690 r;241 502 678 500 738 g;256 424 517 400 540 r;273 420 433 278 485 r;290 424 500 424 530 y;305 427 500 333 520 g;322 460 530 450 600 y;338 400 523 390 530 c;354 403 457 400 490 y;371 440 448 360 450 c;386 337 437 325 455 c;403 328 390 320 420 y;418 382 470 370 488 y;435 418 467 395 475 c;451 400 418 390 465 c;467 392 407 382 440 y;483 406 418 330 425 y;498 395 427 395 475 c");
h+='</g>';

/* TRENES */
rc(27,640,1450.7,23,'#daf5d8');rc(27,732,1450.7,23,'#ffd9d6');
const thick=Z("A 66 1020 100 1000 130 1005 D 150 10 180 45 200 30 235 25 290 45 330 30 360 80 405 150 450 130 490 80 520 90 560 130 600 105 680 90 720 30 735 0 A 745 960 770 975 800 1015 850 1000 890 1015 D 900 60 940 80 965 65 1010 70 1050 110 1075 178 1115 130 1150 140 1180 175 1225 210 1260 185 1295 200 1330 150 1380 95 1440 80 V 0 185 35 140 90 180 130 210 165 200 190 160 220 100 270 85 330 85 370 105 420 125 490 148 550 120 640 160 700 145 760 188 790 145 830 100 880 105 930 85 975 105 1020 92 1080 103 1150 108 1190 65 1260 40 1340 70 1400 65 1450 95 1500 98 B 1170 940 1230 920 1280 910 1350 905 1410 905 1450 915 1490 940 1530 955 1553 960 C 0 958 50 935 90 905 120 910 150 915 210 905 260 910 290 930 320 955 360 945 400 928 440 938 498 935");
const sig=thick.map(p=>[Math.min(p[0]+8,1477.7),p[1]+(p[1]>640?1:0)]);
h+='<g clip-path="url(#ct)">';
const xs=thick[0][0],xe=thick[thick.length-1][0];
pg(thick.concat([[xe,663],[xs,663]]),'#7fbf7f','clip-path="url(#cg)"');
pg(thick.concat([[xe,732],[xs,732]]),'#c08a80','clip-path="url(#cr)"');
for(let i=0;i<thick.length-1;i++){pg([thick[i],thick[i+1],sig[i+1],sig[i]],thick[i+1][1]<=thick[i][1]?'#c6c4f0':'#ecc0ec')}
const thin=Z("A 66 925 80 918 105 920 130 965 150 1020 D 160 80 175 178 205 120 238 100 255 120 270 115 300 0 A 315 950 335 948 355 970 375 1020 D 385 50 400 70 435 80 465 0 A 480 960 495 925 515 965 525 1020 D 530 60 560 128 600 70 640 10 680 10 A 695 1020 710 965 750 955 780 1020 D 785 0 830 60 880 160 910 180 960 110 1010 98 1040 150 1065 180 1115 40 1130 40 1180 130 1220 185 1245 130 1290 118 1330 0 A 1340 990 1355 945 1385 935 1420 930 1480 905 V 0 35 45 50 60 120 100 240 135 300 155 290 175 190 215 70 250 80 290 100 330 130 385 310 415 335 450 320 495 320 550 135 575 140 610 270 635 312 665 245 690 230 715 232 750 302 770 265 810 60 830 52 850 70 885 100 910 52 935 90 975 215 990 190 1030 178 1075 250 1150 250 1185 100 1220 65 1260 55 1300 55 1340 125 1365 140 1385 130 1400 125 1420 160 1450 280 1490 298 1500 290 E 1160 50 1190 0 B 1210 990 1240 960 1280 930 1340 910 1400 910 1440 990 1450 1020 E 1450 55 1490 80 1510 60 1553 90 F 0 90 20 60 45 0 C 70 950 100 925 130 925 210 900 285 960 305 1020 F 325 28 360 10 395 0 C 420 1000 430 1020 F 450 25 485 40 498 52");
const tsig=thin.map(p=>[Math.min(p[0]+4,1477.7),p[1]+.5]);
for(let i=0;i<thin.length-1;i++){pg([thin[i],thin[i+1],tsig[i+1],tsig[i]],thin[i+1][1]<=thin[i][1]?'#cdeccd':'#f0b8b8')}
pl(tsig,'#444',1,'stroke-dasharray="3 2"');
dirSeg(thin,'#000','#e84444',1.7);
h+='</g>';
ln(27,640.3,1477.7,640.3,'#000',1.2);ln(27,663.3,1477.7,663.3,'#000',1.2);
ln(27,697.3,1477.7,697.3,'#1515b5',1.6,'stroke-dasharray="6 5"');
ln(27,732.3,1477.7,732.3,'#000',1.2);ln(27,755.3,1477.7,755.3,'#000',1.2);
h+='<g clip-path="url(#ct)">';
pl(sig,'#2a2a2a',3,'stroke-dasharray="6 5"');
dirSeg(thick,'#0808a8','#f01010',3.8);
h+='</g>';
tris('D',"192 167 273 115 435 78 563 130 628 52 692 18 920 170 1080 165 1240 165 1307 122",true,'#0a0ab0');
tris('D',"257 118 610 62 677 14 1015 108 1130 40 1290 126",false,'#b01010');
tris('A',"352 968 515 962 1370 950 1420 935 1487 910",false,'#c01010');
tris('A',"1388 943 1437 943 1495 1015",true,'#0a0ab0');
tris('B',"92 945 595 938 905 948 1050 990 1290 940 1360 915 1415 912",false,'#c01010');
tris('B',"630 968 920 958 1030 1003 1310 948 1390 935",true,'#0a0ab0');
tris('E',"30 150 256 178 305 175 432 148 532 130 708 57 790 100 825 100 855 62 1130 142 1212 12 1500 65 1552 92",true,'#0a0ab0');
tris('E',"272 168 482 85 742 35 808 98 840 100 1190 5 1520 65",false,'#b01010');
tris('C',"125 940 160 960 193 952 240 955 270 948",true,'#0a0ab0');
tris('C',"110 935 143 948 175 958 222 940 255 948 290 965 418 1010",false,'#c01010');
tris('F',"337 20 372 18 467 28",true,'#0a0ab0');
tris('F',"355 14 485 38",false,'#b01010');

/* WILLY */
const WC={g:'#6fbf6f',l:'#c5c5f5',b:'#bc6a6a',p:'#ffa8a8'};
function bands(crop,str,col,y1,y2,store){const o=O[crop],t=str.trim().split(/\s+/);for(let i=0;i<t.length;i+=3){const a=o[0]+(+t[i+1])/XK,b=o[0]+(+t[i+2])/XK;rc(a,y1,b-a+.3,y2-y1,col[t[i]]);if(store)store.push([a,b,t[i]])}}
bands('D',"g 70 86 l 86 103 b 135 152 p 216 233 p 248 264 g 297 313 b 329 345 p 345 378 p 393 410 g 426 443 b 443 458 g 458 475 l 475 490 b 522 540 p 540 556 g 556 572 l 572 605 l 620 652 b 652 669 g 669 685 l 685 718 l 733 750 l 782 798 l 814 847 b 895 911 p 911 928 p 944 960 p 976 1057 p 1122 1170 p 1186 1220 p 1250 1266 p 1284 1300 p 1331 1347 p 1380 1396 g 1429 1445 l 1445 1508 l 1526 1542",WC,762,837);
bands('E',"l 5 55 l 86 103 l 135 152 l 216 250 l 297 347 b 394 412 g 412 428 b 444 460 p 476 524 g 540 556 l 556 573 b 589 605 g 605 621 l 621 653 l 669 718 l 735 752 l 782 800 l 831 880 l 912 945 l 960 977 l 1010 1041 l 1090 1107 l 1122 1170 l 1203 1220 l 1235 1251 l 1301 1333 l 1365 1398 l 1463 1480 l 1513 1530",WC,762,837);
bands('F',"l 5 88 l 120 137 l 153 185 l 201 218 l 233 250 l 296 313 l 328 345 l 363 394 l 426 461 l 490 505",WC,762,837);
ln(27,768.3,1477.7,768.3,'#000',1.1,'stroke-dasharray="4 3"');
ln(27,834.3,1477.7,834.3,'#000',1.1,'stroke-dasharray="4 3"');
ln(27,784.3,1477.7,784.3,'#0808a8',1.6);
ln(27,801.3,1477.7,801.3,'#0808a8',1.6,'stroke-dasharray="6 5"');
ln(27,817.3,1477.7,817.3,'#d01010',1.5);
const W_B='#0a0acc',W_O='#ff9a0a',W_G='#10b810',W_R='#8b0a0a';
const WS=[[W_B,"D 66 378 75 345 95 320"],[W_O,"D 100 322 125 325 135 370 148 403"],[W_B,"D 148 403 180 385 205 370 225 372"],[W_O,"D 235 368 260 403"],[W_B,"D 260 403 290 375"],[W_O,"D 300 358 310 365 330 375 355 405"],[W_B,"D 372 405 385 400"],[W_O,"D 390 400 410 385"],[W_B,"D 415 375 430 360 465 350"],[W_G,"D 465 350 480 305"],[W_O,"D 482 305 510 352 530 375"],[W_B,"D 550 370 590 335"],[W_O,"D 590 335 610 358"],[W_B,"D 610 358 640 328"],[W_O,"D 640 330 662 370"],[W_B,"D 662 370 680 345"],[W_G,"D 680 345 705 283"],[W_O,"D 708 283 725 318"],[W_G,"D 725 318 742 265 760 310"],[W_O,"D 760 310 775 338"],[W_B,"D 778 330 785 322"],[W_O,"D 790 322 808 335"],[W_B,"D 808 335 838 315"],[W_O,"D 840 315 885 355 905 395 925 395"],[W_B,"D 925 390 955 385 965 375"],[W_O,"D 970 378 1015 410"],[W_R,"D 1015 410 1035 455 1050 458 1090 415"],[W_B,"D 1100 405 1115 402"],[W_R,"D 1115 402 1130 430 1165 440 1210 462 1243 425 1260 448 1300 445"],[W_B,"D 1305 440 1325 395"],[W_O,"D 1330 395 1345 400"],[W_B,"D 1345 403 1365 395"],[W_O,"D 1375 385 1385 380"],[W_B,"D 1400 375 1440 355 1465 320"],[W_G,"D 1465 320 1480 303 1498 280"],[W_O,"D 1500 280 1520 320"],[W_B,"D 1520 320 1530 320"],[W_O,"D 1535 320 1568 350"],[W_B,"E 0 345 20 318 30 315"],[W_G,"E 30 315 45 265 60 280 90 272 130 292 170 290 190 305"],[W_O,"E 195 315 210 322"],[W_B,"E 215 320 240 317"],[W_O,"E 245 317 290 335"],[W_B,"E 295 335 335 316"],[W_O,"E 340 316 365 322 390 375"],[W_B,"E 400 370 430 352"],[W_O,"E 440 355 455 368"],[W_B,"E 458 368 470 368"],[W_O,"E 470 368 485 370"],[W_R,"E 485 370 500 420 515 443"],[W_B,"E 515 443 530 370 560 322"],[W_O,"E 565 320 585 325 595 370"],[W_B,"E 600 360 630 320"],[W_G,"E 630 320 645 272"],[W_O,"E 645 272 665 345"],[W_B,"E 665 345 695 318"],[W_G,"E 695 318 705 315"],[W_O,"E 710 315 730 322"],[W_B,"E 730 322 742 322"],[W_O,"E 745 322 775 340"],[W_B,"E 780 335 790 325"],[W_O,"E 795 325 825 345"],[W_B,"E 825 345 850 318"],[W_G,"E 850 318 872 270 905 292 925 263 940 263 960 292 975 275 1005 305 1033 268 1050 300 1065 300 1083 315 1095 300 1130 302 1160 275 1195 298 1210 280 1230 282 1245 265 1300 272 1320 263 1360 272 1395 263 1420 272 1438 290"],[W_O,"E 1440 290 1455 318"],[W_G,"E 1455 318 1470 283 1490 302 1520 305"],[W_O,"E 1525 310 1553 316"],[W_B,"F 0 316 15 315"],[W_G,"F 15 315 45 297 62 268 105 270 125 268 145 295 170 268 205 265 225 295 245 265 260 268 300 305"],[W_O,"F 305 295 320 318"],[W_G,"F 325 310 340 290 365 305 385 275 420 308 450 290 480 298 498 292"]];
WS.forEach(a=>{const p=Z(a[1]);if(a[0]===W_G){pg(p.concat([[p[p.length-1][0],784.3],[p[0][0],784.3]]),'rgba(0,120,0,.35)')}if(a[0]===W_R){pg(p.concat([[p[p.length-1][0],817.3],[p[0][0],817.3]]),'rgba(120,0,0,.45)')}});
WS.forEach(a=>pl(a[1],a[0],a[0]===W_G?3:2.8));
tris('D',"127 360 320 360 435 362 517 360 645 360 887 360",false,'#a00808',5.5);
tris('D',"290 365 420 365 452 365 548 365 660 365 1420 365",true,'#0a0ab0',5.5);
tris('E',"385 360 435 360 582 360",false,'#a00808',5.5);
tris('E',"403 365 535 365 597 365",true,'#0a0ab0',5.5);

/* AWESOME */
const afast=Z("D 66 650 110 620 130 630 160 660 200 672 280 680 340 675 380 688 420 680 450 670 500 645 540 660 600 660 680 665 720 650 770 612 820 625 870 650 920 695 980 685 1010 685 1060 728 1100 695 1130 690 1190 715 1240 710 1275 700 1340 655 1400 635 1440 632 1490 600 1568 650 E 60 640 110 615 170 630 220 660 300 678 370 670 420 688 480 672 525 697 570 640 600 655 660 630 700 645 760 655 840 660 880 625 930 610 965 562 1020 590 1045 590 1090 640 1140 645 1180 630 1230 630 1280 610 1330 595 1400 580 1430 585 1480 640 1490 632 1553 668 F 0 670 40 660 85 615 130 590 160 595 210 570 245 530 270 495 300 520 340 560 380 575 400 565 440 620 498 637");
const aslow=Z("D 66 680 130 650 170 665 250 672 350 672 420 678 500 660 580 672 680 665 720 645 790 620 850 630 920 660 1000 672 1050 695 1090 710 1150 700 1230 725 1270 725 1340 680 1420 655 1500 615 1568 625 E 30 640 110 600 170 600 220 615 300 655 360 660 450 678 520 688 550 685 600 660 720 630 840 648 900 620 1000 565 1060 575 1140 605 1230 600 1400 568 1440 568 1500 605 1553 623 F 0 620 45 628 110 590 160 572 230 560 290 500 315 493 350 515 400 518 440 535 498 565");
const BASE=902.3;
for(let x=31.8;x<=1480;x+=6.61){const f=yAt(afast,x),s=yAt(aslow,x),rise=yAt(afast,x+3)<yAt(afast,x-3),srise=yAt(aslow,x+3)<yAt(aslow,x-3);
 if(s<BASE&&s<f)rc(x-1.7,s,3.4,BASE-s,srise?'#c8f5c8':'#ffc4c4');
 if(f<BASE)rc(x-1.8,f,3.6,BASE-f,rise?'#1010f0':'#ff00e0');else rc(x-1.8,BASE,3.6,f-BASE,rise?'#20a090':'#e82020');}
ln(27,BASE,1477.7,BASE,'#1010ff',1.8);
dirSeg(afast,'#101040','#b000b0',3);
dirSeg(aslow,'#66ff66','#ff9a0a',3);
tris('D',"158 668 257 672 355 678 532 662 678 665 790 625",false,'#f0f000',5);
tris('D',"207 668 320 668 450 672 582 665 710 648 1098 705",true,'#00eeee',5);
tris('E',"62 622 548 670 872 638 938 595",true,'#00eeee',5);
tris('E',"95 617 743 635 920 610 1002 580",false,'#f0f000',5);
tris('F',"210 562 258 512",true,'#00eeee',5);
tris('F',"242 548 290 506",false,'#f0f000',5);

/* BARRA */
const BC={w:'#aee8ff',s:'#6565bd',y:'#ffff80',G:'#40ff40',m:'#6a0505'};
const BL=[];
function seq(crop,str){bands(crop,str,BC,926.8,994,BL)}
seq('D',"w 66 103 s 103 119 w 119 135 s 135 167 w 167 233 y 233 247 m 247 265 s 265 297 w 297 345 s 345 378 w 378 426 s 426 443 y 443 458 m 458 475 s 475 490 w 490 507 s 507 540 y 540 556 G 556 572 y 572 652 G 652 669 y 669 685 G 685 718 m 718 733 s 733 813 w 813 895 s 895 929 w 929 975 s 975 992 w 992 1024 s 1024 1073 w 1073 1187 s 1187 1284 w 1284 1301 s 1301 1347 w 1347 1445 y 1445 1510 m 1510 1526 s 1526 1558 y 1558 1568");
seq('E',"y 0 22 m 22 38 s 38 120 w 120 152 s 152 168 w 168 184 s 184 200 w 200 298 y 298 492 G 492 541 m 541 556 s 556 573 w 573 590 s 590 622 w 622 637 s 637 703 w 703 816 y 816 848 G 848 865 m 865 880 s 880 1057 w 1057 1074 s 1074 1090 w 1090 1171 s 1171 1252 w 1252 1301 s 1301 1333 w 1333 1382 s 1382 1398 w 1398 1431 s 1431 1494 w 1494 1512 s 1512 1530 w 1530 1553");
seq('F',"w 0 56 s 56 120 w 120 137 s 137 200 w 200 218 s 218 345 w 345 505");
const bh=Z("D 66 905 260 908 400 908 500 905 620 915 740 900 760 880 810 880 850 885 900 885 1020 900 1180 905 1320 895 1400 900 1450 910 1520 905 1568 910 E 100 895 200 892 280 905 400 920 490 930 560 905 680 882 800 905 850 910 1050 860 1150 875 1240 865 1300 880 1400 885 1480 855 1553 868 F 0 870 50 875 100 868 170 860 220 850 270 800 330 755 370 765 430 790 490 820 508 825");
for(let x=31.8;x<=1480;x+=6.61){const y=yAt(bh,x);let c='w';for(const b of BL){if(x>=b[0]&&x<=b[1]){c=b[2];break}}
 const blue=(c==='s');
 rc(x-2.9,y,5.8,994-y,blue?'rgba(40,40,220,.65)':'rgba(200,60,60,.55)');
 rc(x-1.2,y,2.4,994-y,blue?'rgba(20,20,200,.6)':'rgba(190,30,30,.45)');}
ln(27,985.7,1477.7,985.7,'#5a1a1a',1);

/* ticks */
[64.7,120.7,176.7,232.7,288.7,344.7,400.7,456.7,513,569.7,622.7,640,663,697,732,755,768,784,801,817,834,851,902,932,956,973,985].forEach(y=>ln(1879,y,1883,y,'#5a7080',1));
ln(1879,138.5,1883.5,138.5,'#118811',1.2);ln(1879,152,1883.5,152,'#c01818',1.2);ln(1879,218,1883.5,218,'#1a1a90',1.2);
document.getElementById('dyn').innerHTML=h;
})();
</script>
</body></html>
